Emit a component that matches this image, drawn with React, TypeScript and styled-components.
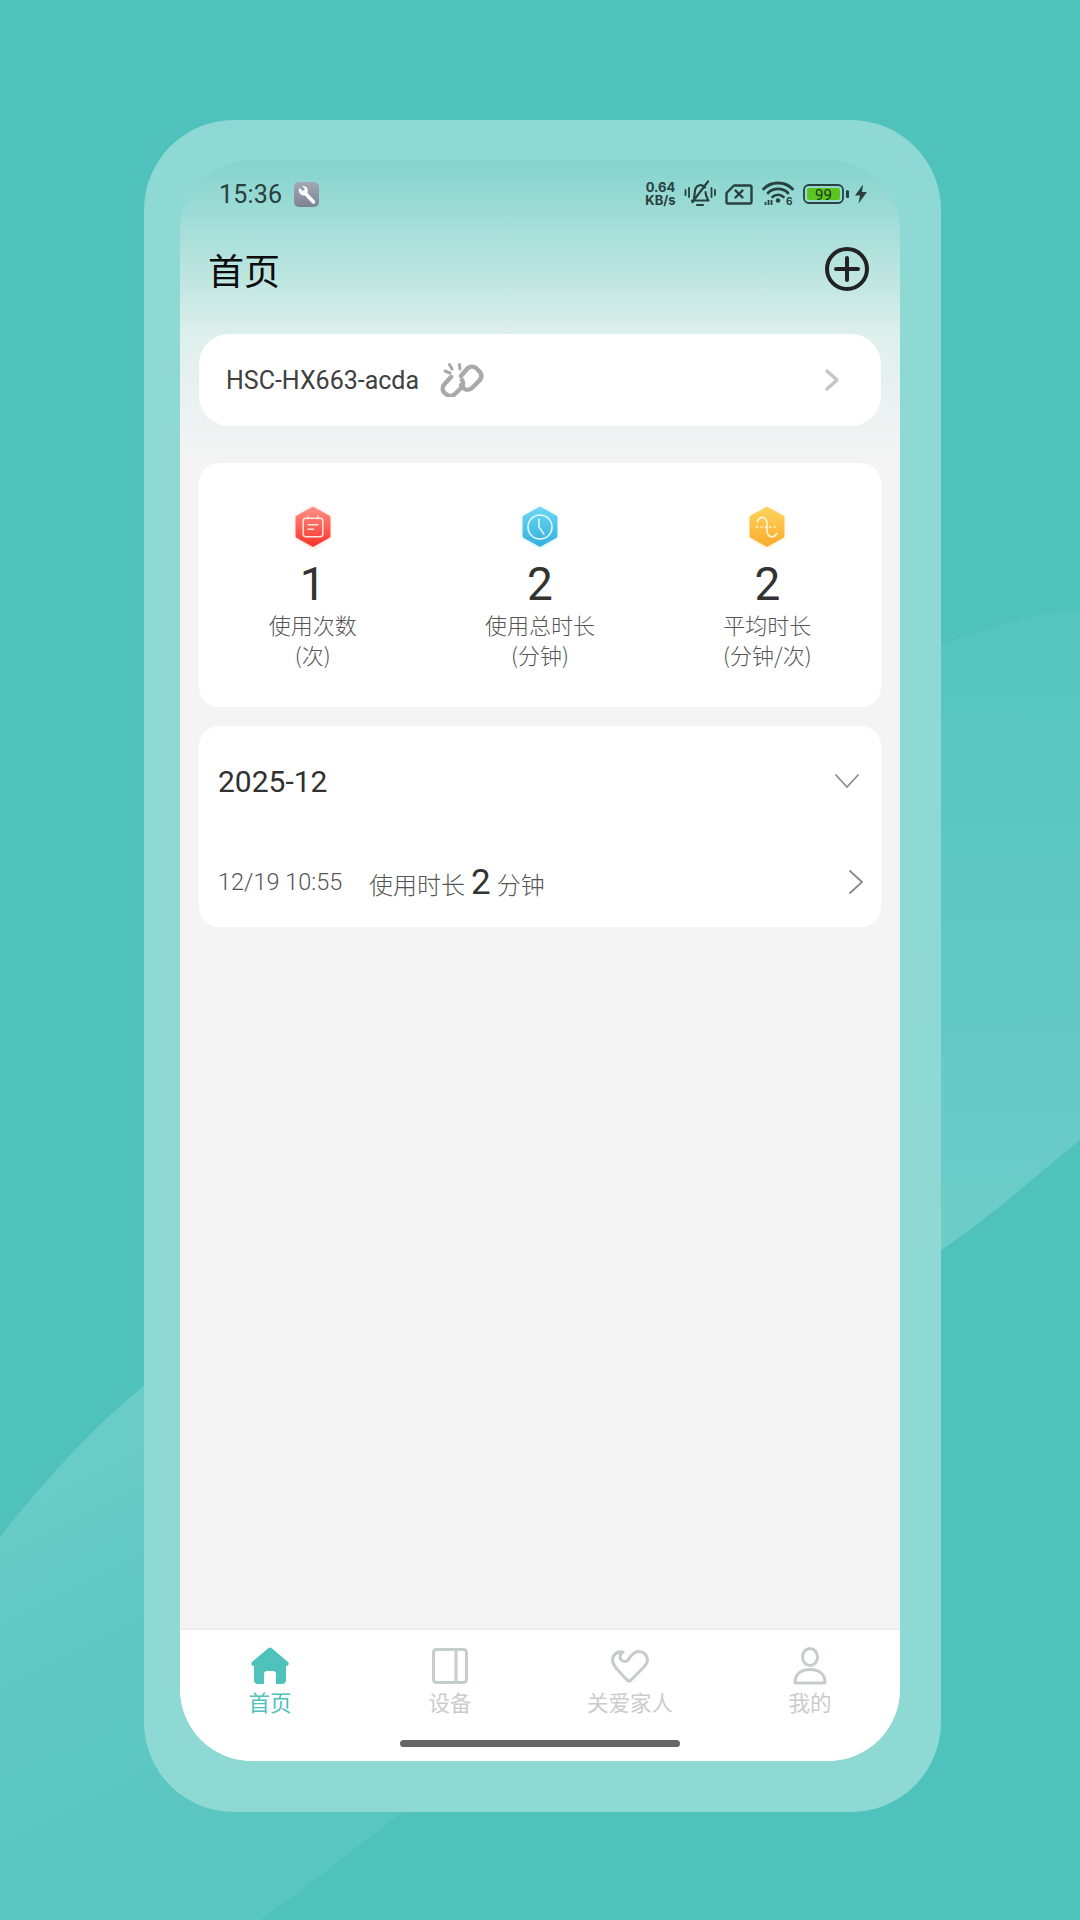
import React from "react";
import styled, { createGlobalStyle } from "styled-components";

const GlobalStyle = createGlobalStyle`
  html, body {
    margin: 0;
    padding: 0;
    background: #4fc2bc;
  }
  * {
    box-sizing: border-box;
  }
`;

const Page = styled.div`
  position: relative;
  width: 1080px;
  height: 1920px;
  padding: 120px 139px 108px 144px;
  overflow: hidden;
  background: #4fc2bc;
  font-family: "Noto Sans CJK SC", "Noto Sans", sans-serif;
`;

const Backdrop = styled.svg`
  position: absolute;
  inset: 0;
`;

const PhoneFrame = styled.div`
  position: relative;
  height: 100%;
  padding: 40px 41px 51px 36px;
  border-radius: 90px;
  background: #8fd9d4;
`;

const Screen = styled.div`
  display: flex;
  flex-direction: column;
  height: 100%;
  overflow: hidden;
  border-radius: 72px;
  background: linear-gradient(180deg, #84d3cd 0, #bfe6e1 120px, #deefec 175px, #f4f4f4 300px);
`;

const StatusBar = styled.div`
  display: flex;
  align-items: center;
  height: 68px;
  padding: 0 32px 0 39px;
`;

const Clock = styled.span`
  font-family: Roboto, sans-serif;
  font-size: 25px;
  font-weight: 400;
  letter-spacing: 0.2px;
  color: #29403f;
  margin-right: 12px;
`;

const StatusIcons = styled.div`
  display: flex;
  align-items: center;
  margin-left: auto;
`;

const NetSpeed = styled.div`
  display: flex;
  flex-direction: column;
  align-items: center;
  width: 33px;
  margin-right: 7px;
  font-family: Inter, sans-serif;
  font-weight: 700;
  color: #29403f;
  line-height: 13px;
  font-size: 13px;
`;

const TitleRow = styled.div`
  display: flex;
  align-items: center;
  justify-content: space-between;
  height: 84px;
  padding: 0 31px 3px 28px;
`;

const Title = styled.h1`
  margin: 0;
  font-size: 36px;
  font-weight: 400;
  color: #0c0c0c;
`;

const Content = styled.div`
  display: flex;
  flex-direction: column;
  flex: 1;
  padding: 22px 19px 0;
`;

const Card = styled.div<{ $radius?: number }>`
  background: #fff;
  border-radius: ${(p) => p.$radius ?? 20}px;
`;

const DeviceCard = styled(Card)`
  display: flex;
  align-items: center;
  height: 92px;
  padding: 0 41px 0 27px;
  margin-bottom: 37px;
`;

const DeviceName = styled.span`
  font-family: Roboto, sans-serif;
  font-size: 25px;
  font-weight: 400;
  color: #404040;
  margin-right: 21px;
`;

const StatsCard = styled(Card)`
  display: grid;
  grid-template-columns: repeat(3, 1fr);
  height: 244px;
  margin-bottom: 19px;
  padding-top: 40px;
`;

const Stat = styled.div`
  display: flex;
  flex-direction: column;
  align-items: center;
`;

const StatValue = styled.div`
  font-family: Roboto, sans-serif;
  font-size: 46px;
  font-weight: 400;
  line-height: 54px;
  margin: 6px 0 -2px;
  color: #333;
`;

const StatLabel = styled.div`
  font-size: 22px;
  font-weight: 300;
  line-height: 30px;
  text-align: center;
  color: #555;
`;

const MonthCard = styled(Card)`
  height: 201px;
  padding: 0 17px 0 19px;
`;

const MonthHeader = styled.div`
  display: flex;
  align-items: center;
  justify-content: space-between;
  height: 110px;
  padding-right: 4px;
  font-family: Roboto, sans-serif;
  font-size: 30px;
  color: #303030;
`;

const RecordRow = styled.div`
  display: flex;
  align-items: center;
  height: 62px;
  margin-top: 15px;
`;

const RecordTime = styled.span`
  width: 151px;
  font-family: Roboto, sans-serif;
  font-size: 23.5px;
  font-weight: 300;
  color: #555;
`;

const RecordText = styled.span`
  flex: 1;
  font-size: 24px;
  font-weight: 300;
  color: #555;
`;

const RecordValue = styled.b`
  margin: 0 6px;
  font-family: Roboto, sans-serif;
  font-size: 35px;
  font-weight: 400;
  color: #333;
`;

const TabBar = styled.nav`
  position: relative;
  display: grid;
  grid-template-columns: repeat(4, 1fr);
  height: 133px;
  padding-top: 17px;
  border-top: 2px solid #eeeeee;
  background: #fff;
`;

const Tab = styled.div<{ $active?: boolean }>`
  display: flex;
  flex-direction: column;
  align-items: center;
  gap: 2px;
  font-size: 21.5px;
  font-weight: 400;
  line-height: 30px;
  color: ${(p) => (p.$active ? "#4fc2bc" : "#cccccc")};
`;

const HomeBar = styled.div`
  position: absolute;
  left: 220px;
  bottom: 14px;
  width: 280px;
  height: 7px;
  border-radius: 4px;
  background: #666;
`;

const Hexagon = ({ id, from, to, glow, children }: { id: string; from: string; to: string; glow: string; children: React.ReactNode }) => (
  <svg width="48" height="48" viewBox="2 2 44 44">
    <defs>
      <linearGradient id={id} x1="0" y1="0" x2="0" y2="1">
        <stop offset="0" stopColor={from} />
        <stop offset="1" stopColor={to} />
      </linearGradient>
      <filter id={`${id}-blur`} x="-30%" y="-30%" width="160%" height="160%">
        <feGaussianBlur stdDeviation="2" />
      </filter>
    </defs>
    <path d="M24 6 L39 14.500 V33.500 L24 43 L9 33.500 V14.500 Z" fill={glow} opacity="0.55" filter={`url(#${id}-blur)`} />
    <path d="M24 7 L38.500 15 V32.500 L24 40.500 L9.500 32.500 V15 Z" fill={`url(#${id})`} stroke={`url(#${id})`} strokeWidth="3" strokeLinejoin="round" />
    {children}
  </svg>
);

const App = () => {
  return (
    <Page>
      <GlobalStyle />
      <Backdrop width="1080" height="1920" viewBox="0 0 1080 1920">
        <defs>
          <linearGradient id="rightBlob" x1="0" y1="0" x2="0" y2="1">
            <stop offset="0" stopColor="#55c5bf" />
            <stop offset="0.6" stopColor="#63c9c5" />
            <stop offset="1" stopColor="#6ecdc9" />
          </linearGradient>
          <linearGradient id="leftBlob" x1="0" y1="0" x2="0.4" y2="1">
            <stop offset="0" stopColor="#70cec9" />
            <stop offset="0.5" stopColor="#5fc8c3" />
            <stop offset="1" stopColor="#5ac6c1" />
          </linearGradient>
        </defs>
        <path d="M1080 610 C1030 613 985 630 900 658 L900 1274 C960 1245 1030 1180 1080 1140 Z" fill="url(#rightBlob)" />
        <path d="M0 1537 C45 1480 95 1425 144 1386 L420 1800 C370 1835 320 1878 260 1920 L0 1920 Z" fill="url(#leftBlob)" />
      </Backdrop>
      <PhoneFrame>
        <Screen>
          <StatusBar>
            <Clock>15:36</Clock>
            <svg width="25" height="25" viewBox="0 0 25 25">
              <defs>
                <linearGradient id="toolBg" x1="0" y1="0" x2="0" y2="1">
                  <stop offset="0" stopColor="#a1a9b6" />
                  <stop offset="1" stopColor="#7c8494" />
                </linearGradient>
              </defs>
              <rect width="25" height="25" rx="5" fill="url(#toolBg)" />
              <path d="M19.500 20 L11.500 11.500" stroke="#fff" strokeWidth="3.500" strokeLinecap="round" />
              <path d="M5.500 6 L9 9 L11 7 L8 4 A5 5 0 0 1 13.500 11 L10.500 13.500 A5 5 0 0 1 5.500 6 Z" fill="#fff" />
            </svg>
            <StatusIcons>
              <NetSpeed>
                <span>0.64</span>
                <span>KB/s</span>
              </NetSpeed>
              <svg width="32" height="28" viewBox="0 0 32 28" fill="none" stroke="#29403f" strokeWidth="2.200" strokeLinecap="round" strokeLinejoin="round">
                <path d="M10 18 C11 15 10 9 13 6.500 C16 4.500 19 5 21 7.500" />
                <path d="M21.500 12 C21.500 16 23 18 24.500 20.500 L8 20.500" />
                <path d="M13 25 H19" />
                <path d="M24 1.500 L8.500 22" />
                <path d="M1.500 10 V15 M5 8 V17 M27.500 8 V17 M31 10 V15" strokeWidth="1.800" />
              </svg>
              <svg width="28" height="21" viewBox="0 0 28 21" fill="none" stroke="#29403f" strokeLinejoin="round" style={{ marginLeft: 9 }}>
                <path d="M9 1.500 H25 A1.500 1.500 0 0 1 26.500 3 V18 A1.500 1.500 0 0 1 25 19.500 H3 A1.500 1.500 0 0 1 1.500 18 V9 Z" strokeWidth="2.400" />
                <path d="M10.500 6.500 L17.500 13.500 M17.500 6.500 L10.500 13.500" strokeWidth="2.400" strokeLinecap="round" />
              </svg>
              <svg width="32" height="28" viewBox="0 0 32 28" fill="none" stroke="#29403f" strokeLinecap="round" style={{ marginLeft: 9 }}>
                <path d="M1.500 9 C9 1 23 1 30.500 9" strokeWidth="2.800" />
                <path d="M6 13 C11 7.500 21 7.500 26 13" strokeWidth="2.800" />
                <path d="M10.500 17 C13.500 14 18.500 14 21.500 17" strokeWidth="2.600" />
                <circle cx="16" cy="20.500" r="2.300" fill="#29403f" stroke="none" />
                <path d="M3.500 22 V25 M6.500 20 V25 M9.500 20 V25" strokeWidth="1.800" strokeLinecap="butt" />
                <text x="24" y="25" fontFamily="Inter, sans-serif" fontSize="10" fontWeight="700" fill="#29403f" stroke="none">6</text>
              </svg>
              <svg width="48" height="20" viewBox="0 0 48 20" style={{ marginLeft: 9 }}>
                <rect x="1" y="1" width="39" height="18" rx="5" fill="none" stroke="#29403f" strokeWidth="1.800" />
                <rect x="4" y="4" width="33" height="12" rx="2" fill="#5bc61e" />
                <rect x="43" y="6" width="3" height="8" rx="1.500" fill="#29403f" />
                <text x="20.500" y="15.500" textAnchor="middle" fontFamily="Roboto, sans-serif" fontSize="15" fill="#1d3320">99</text>
              </svg>
              <svg width="14" height="20" viewBox="0 0 14 20" style={{ marginLeft: 3 }}>
                <path d="M9 0.500 L1 11.500 H6 L4.500 19.500 L13 8 H8 Z" fill="#29403f" />
              </svg>
            </StatusIcons>
          </StatusBar>
          <TitleRow>
            <Title>首页</Title>
            <svg width="44" height="44" viewBox="0 0 44 44" fill="none" stroke="#222" strokeWidth="4">
              <circle cx="22" cy="22" r="20" />
              <path d="M11 22 H33 M22 11 V33" strokeLinecap="round" />
            </svg>
          </TitleRow>
          <Content>
            <DeviceCard $radius={30}>
              <DeviceName>HSC-HX663-acda</DeviceName>
              <svg width="44" height="34" viewBox="0 0 44 34" fill="none" stroke="#a9a9a9" strokeWidth="4.500" strokeLinecap="round" strokeLinejoin="round">
                <path d="M21 13 L27 6 A6.500 6.500 0 0 1 36 5 L39 8 A6.500 6.500 0 0 1 39 18 L32 25 A6.500 6.500 0 0 1 23 25 L21 22" />
                <path d="M11 14 L4.500 21 A6.500 6.500 0 0 0 4.500 30 L6 31 A6.500 6.500 0 0 0 15 31 L21 25 A6 6 0 0 0 22 17" />
                <path d="M9.500 1.500 L12 6 M19.500 1.500 L20 6 M5 8 L10 10" strokeWidth="3" />
              </svg>
              <svg width="16" height="24" viewBox="0 0 16 24" fill="none" stroke="#c6c6c6" strokeWidth="3.500" strokeLinecap="round" strokeLinejoin="round" style={{ marginLeft: "auto" }}>
                <path d="M3 3 L13 12 L3 21" />
              </svg>
            </DeviceCard>
            <StatsCard>
              <Stat>
                <Hexagon id="hexRed" from="#ff8d80" to="#f8382d" glow="#ff8f85">
                  <rect x="15" y="16" width="18" height="17" rx="2.500" fill="none" stroke="#ffe3df" strokeWidth="1.400" />
                  <path d="M19.500 13.500 V17 M28.500 13.500 V17 M19 22 H29 M19 26 H25" stroke="#ffe3df" strokeWidth="1.400" />
                </Hexagon>
                <StatValue>1</StatValue>
                <StatLabel>
                  使用次数
                  <br />
                  (次)
                </StatLabel>
              </Stat>
              <Stat>
                <Hexagon id="hexBlue" from="#6bd5f2" to="#36b1df" glow="#7fdcf5">
                  <circle cx="24" cy="24" r="11" fill="none" stroke="#e9fbff" strokeWidth="1.400" />
                  <path d="M23 16.500 V24 L28 31" fill="none" stroke="#e9fbff" strokeWidth="1.400" />
                </Hexagon>
                <StatValue>2</StatValue>
                <StatLabel>
                  使用总时长
                  <br />
                  (分钟)
                </StatLabel>
              </Stat>
              <Stat>
                <Hexagon id="hexYellow" from="#fdd25c" to="#fbad2e" glow="#ffd978">
                  <path d="M15 19 C18 13.500 23 14 24 20 V28 C25 34 30 34.500 33 30" fill="none" stroke="#fff6df" strokeWidth="1.400" strokeLinecap="round" />
                  <path d="M14 24 H34" stroke="#fff6df" strokeWidth="1.400" strokeDasharray="2 2" />
                </Hexagon>
                <StatValue>2</StatValue>
                <StatLabel>
                  平均时长
                  <br />
                  (分钟/次)
                </StatLabel>
              </Stat>
            </StatsCard>
            <MonthCard>
              <MonthHeader>
                2025-12
                <svg width="26" height="16" viewBox="0 0 26 16" fill="none" stroke="#888" strokeWidth="1.600">
                  <path d="M1.500 1.500 L13 14 L24.500 1.500" />
                </svg>
              </MonthHeader>
              <RecordRow>
                <RecordTime>12/19 10:55</RecordTime>
                <RecordText>
                  使用时长
                  <RecordValue>2</RecordValue>
                  分钟
                </RecordText>
                <svg width="16" height="26" viewBox="0 0 16 26" fill="none" stroke="#888" strokeWidth="1.800">
                  <path d="M1.500 1.500 L14 13 L1.500 24.500" />
                </svg>
              </RecordRow>
            </MonthCard>
          </Content>
          <TabBar>
            <Tab $active>
              <svg width="38" height="38" viewBox="0 0 38 38">
                <path d="M17.500 1 C18.300 0.300 19.700 0.300 20.500 1 L37 15 C38.500 16.500 37.500 19 35.500 19 H35 V33 C35 35.500 33.500 37 31 37 H25 V27 C25 25 23.500 24 22 24 H16 C14.500 24 13 25 13 27 V37 H7 C4.500 37 3 35.500 3 33 V19 H2.500 C0.500 19 -0.500 16.500 1 15 Z" fill="#4fc2bc" />
              </svg>
              首页
            </Tab>
            <Tab>
              <svg width="36" height="38" viewBox="0 -1 36 38" fill="none" stroke="#c5cdcb" strokeWidth="3">
                <rect x="1.500" y="1.500" width="33" height="33" rx="3" />
                <path d="M24 1.500 V34.500" />
              </svg>
              设备
            </Tab>
            <Tab>
              <svg width="38" height="38" viewBox="0 -3 38 38" fill="none" stroke="#c5cdcb" strokeWidth="3" strokeLinejoin="round" strokeLinecap="round">
                <path d="M12 2 C6 1 1.500 5 1.500 10 C1.500 13 3 15.500 5 18 L16 30 C17.200 31 18.800 31 20 30 L32 18 C34.500 15.500 36.500 13.500 36.500 10 C36.500 5 32.500 1.500 28 1.500 C23 1.500 20 5 17 10 C14.500 13 9 11 9 7 C9 5 10 3 12 2 Z" />
              </svg>
              关爱家人
            </Tab>
            <Tab>
              <svg width="36" height="38" viewBox="0 0 36 38" fill="none" stroke="#c5cdcb" strokeWidth="3">
                <ellipse cx="18" cy="10" rx="7.500" ry="8.500" />
                <path d="M3 36 C3 27 9 22.500 18 22.500 C27 22.500 33 27 33 36 Z" strokeLinejoin="round" />
              </svg>
              我的
            </Tab>
            <HomeBar />
          </TabBar>
        </Screen>
      </PhoneFrame>
    </Page>
  );
};

export default App;
